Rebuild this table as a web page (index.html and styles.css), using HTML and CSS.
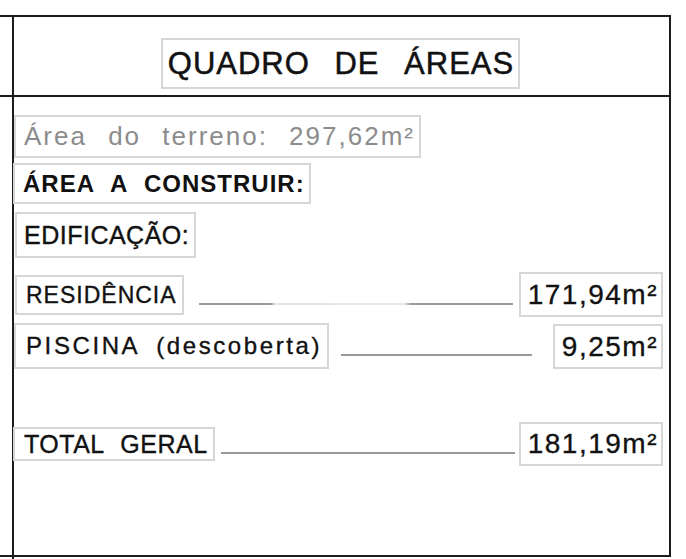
FILE: index.html
```html
<!DOCTYPE html>
<html lang="pt">
<head>
<meta charset="utf-8">
<title>Quadro de Áreas</title>
<link rel="stylesheet" href="styles.css">
</head>
<body>
<div class="sheet">
  <div class="head-row">
    <div class="gutter"></div>
    <div class="head-cell">
      <div class="box title">QUADRO DE ÁREAS</div>
    </div>
  </div>
  <div class="body-row">
    <div class="gutter"></div>
    <div class="body-cell">
      <div class="box land">Área do terreno: 297,62m²</div>
      <div class="box section">ÁREA A CONSTRUIR:</div>
      <div class="box sub">EDIFICAÇÃO:</div>
      <div class="row row-res">
        <div class="box label res">RESIDÊNCIA</div>
        <div class="leader leader-res"></div>
        <div class="box value v-res">171,94m²</div>
      </div>
      <div class="row row-pis">
        <div class="box label pis">PISCINA (descoberta)</div>
        <div class="leader leader-pis"></div>
        <div class="box value v-pis">9,25m²</div>
      </div>
      <div class="row row-tot">
        <div class="box label tot">TOTAL GERAL</div>
        <div class="leader leader-tot"></div>
        <div class="box value v-tot">181,19m²</div>
      </div>
    </div>
  </div>
</div>
<div class="tail"></div>
</body>
</html>
```
FILE: styles.css
```css
html, body {
  margin: 0;
  padding: 0;
  background: #ffffff;
}
body {
  width: 686px;
  height: 559px;
  overflow: hidden;
  font-family: "Liberation Sans", Arial, sans-serif;
  color: #111111;
}
.sheet {
  margin-top: 15px;
  width: 669px;
  border-top: 2px solid #1c1c1c;
  border-bottom: 2px solid #1c1c1c;
  border-right: 2px solid #1c1c1c;
}
.head-row {
  display: flex;
  height: 78px;
  border-bottom: 2px solid #1c1c1c;
}
.body-row {
  display: flex;
  height: 458px;
}
.gutter {
  width: 12px;
  flex: none;
}
.head-cell {
  flex: 1;
  border-left: 2px solid #1c1c1c;
  display: flex;
  justify-content: center;
  align-items: flex-start;
  padding-top: 21px;
}
.body-cell {
  flex: 1;
  border-left: 2px solid #1c1c1c;
  display: flex;
  flex-direction: column;
  align-items: flex-start;
  padding: 18px 6px 0 0;
}
.tail {
  margin-left: 12px;
  width: 0;
  height: 6px;
  border-left: 2px solid #1c1c1c;
}
.box {
  border: 2px solid #d6d6d6;
  white-space: nowrap;
}
.title {
  font-size: 31px;
  line-height: 46px;
  height: 46px;
  padding: 1px 4px 0 5px;
  box-sizing: content-box;
  letter-spacing: 1px;
  word-spacing: 15px;
  margin-left: -2px;
  -webkit-text-stroke: 0.5px #111111;
}
.land {
  color: #8c8c8c;
  font-size: 26px;
  line-height: 39px;
  letter-spacing: 2px;
  word-spacing: 12px;
  padding: 0 4px 0 8px;
}
.section {
  margin-top: 5px;
  font-weight: bold;
  font-size: 24px;
  line-height: 37px;
  letter-spacing: 1px;
  word-spacing: 9px;
  padding: 0 4px 0 8px;
  margin-left: -1px;
}
.sub {
  margin-top: 8px;
  font-size: 25px;
  line-height: 42px;
  letter-spacing: 0.5px;
  padding: 0 5px 0 7px;
  margin-left: 1px;
  -webkit-text-stroke: 0.4px #111111;
}
.row {
  display: flex;
  align-items: center;
  align-self: stretch;
}
.row-res { margin-top: 14px; }
.row-pis { margin-top: 6px; }
.row-tot { margin-top: 53px; }
.label {
  font-size: 23px;
  letter-spacing: 1px;
  padding: 0 5px 0 9px;
  -webkit-text-stroke: 0.35px #111111;
}
.res { line-height: 36px; margin-left: 1px; }
.pis { font-size: 24px; line-height: 42px; letter-spacing: 2.6px; word-spacing: 8px; padding-left: 10px; }
.tot { line-height: 30px; font-size: 25px; letter-spacing: 0.5px; word-spacing: 9px; padding-left: 9px; margin-left: -1px; }
.leader {
  flex: 1;
  height: 2px;
  background: #9a9a9a;
  align-self: center;
  margin-top: 18px;
}
.leader-res {
  margin-left: 15px;
  margin-right: 6px;
  background: linear-gradient(to right, #9a9a9a 0, #9a9a9a 72px, #e4e4e4 76px, #e8e8e8 205px, #9a9a9a 212px, #9a9a9a 100%);
}
.leader-pis { margin-left: 12px; margin-right: 21px; }
.leader-tot { margin-left: 6px; margin-right: 4px; }
.value {
  font-size: 28px;
  letter-spacing: 1.5px;
  padding: 0 3px 0 7px;
  line-height: 41px;
  -webkit-text-stroke: 0.3px #111111;
}
.v-tot { line-height: 40px; }
```
